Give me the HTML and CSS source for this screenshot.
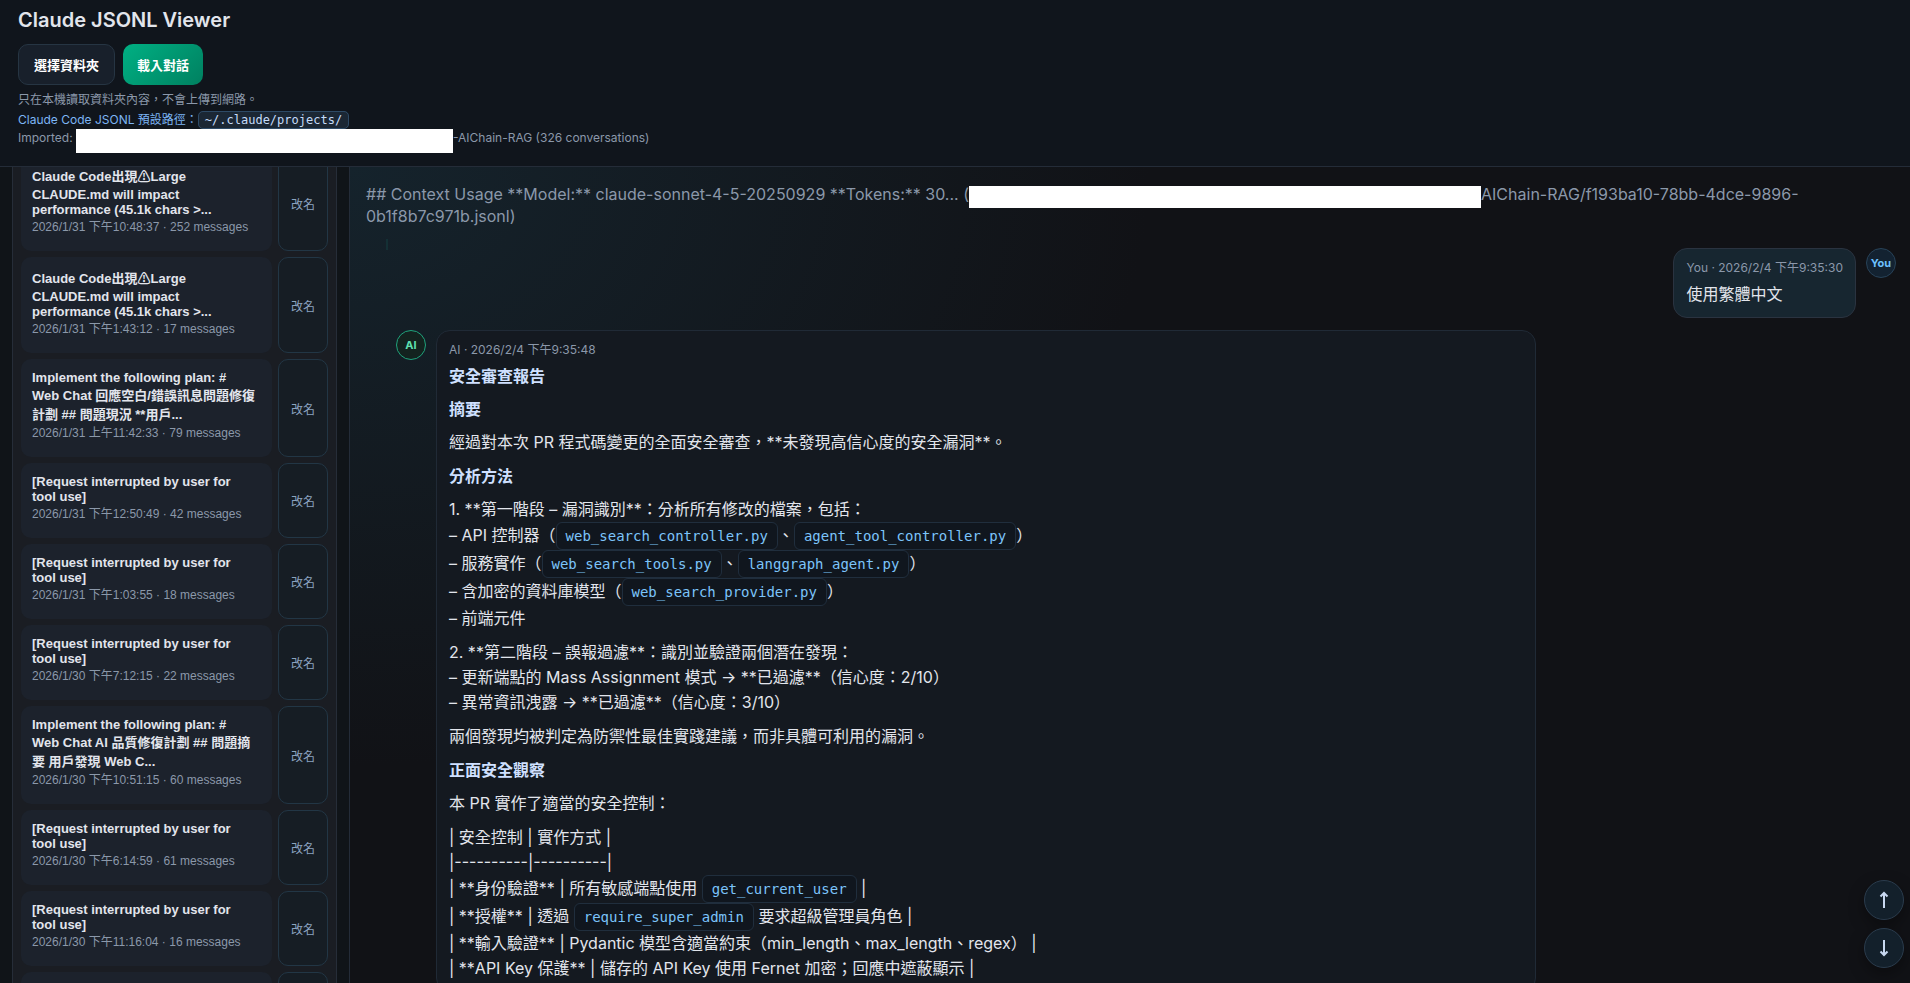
FILE: index.html
```html
<!doctype html>
<html lang="zh-Hant">
<head>
<meta charset="utf-8">
<meta name="viewport" content="width=device-width, initial-scale=1.0">
<title>Claude JSONL Viewer</title>
<link rel="stylesheet" href="styles.css">
</head>
<body>
<header class="topbar">
    <h1>Claude JSONL Viewer</h1>
    <div class="actions">
        <button type="button" class="btn">選擇資料夾</button>
        <button type="button" class="btn primary">載入對話</button>
    </div>
    <div class="hint">只在本機讀取資料夾內容，不會上傳到網路。</div>
    <div class="hint path">Claude Code JSONL 預設路徑：<code>~/.claude/projects/</code></div>
    <div class="hint status">Imported: <span class="redacted short"></span>-AIChain-RAG (326 conversations)</div>
</header>
<div class="layout">
    <aside class="sidebar" id="sidebar">
        <div class="row">
            <button type="button" class="item"><b>Claude Code出現<i>⚠</i>Large<br>CLAUDE.md will impact<br>performance (45.1k chars &gt;...</b><span>2026/1/31 下午10:48:37 · 252 messages</span></button>
            <button type="button" class="rename">改名</button>
        </div>
        <div class="row">
            <button type="button" class="item"><b>Claude Code出現<i>⚠</i>Large<br>CLAUDE.md will impact<br>performance (45.1k chars &gt;...</b><span>2026/1/31 下午1:43:12 · 17 messages</span></button>
            <button type="button" class="rename">改名</button>
        </div>
        <div class="row">
            <button type="button" class="item"><b>Implement the following plan: #<br>Web Chat 回應空白/錯誤訊息問題修復<br>計劃 ## 問題現況 **用戶...</b><span>2026/1/31 上午11:42:33 · 79 messages</span></button>
            <button type="button" class="rename">改名</button>
        </div>
        <div class="row">
            <button type="button" class="item"><b>[Request interrupted by user for<br>tool use]</b><span>2026/1/31 下午12:50:49 · 42 messages</span></button>
            <button type="button" class="rename">改名</button>
        </div>
        <div class="row">
            <button type="button" class="item"><b>[Request interrupted by user for<br>tool use]</b><span>2026/1/31 下午1:03:55 · 18 messages</span></button>
            <button type="button" class="rename">改名</button>
        </div>
        <div class="row">
            <button type="button" class="item"><b>[Request interrupted by user for<br>tool use]</b><span>2026/1/30 下午7:12:15 · 22 messages</span></button>
            <button type="button" class="rename">改名</button>
        </div>
        <div class="row">
            <button type="button" class="item"><b>Implement the following plan: #<br>Web Chat AI 品質修復計劃 ## 問題摘<br>要 用戶發現 Web C...</b><span>2026/1/30 下午10:51:15 · 60 messages</span></button>
            <button type="button" class="rename">改名</button>
        </div>
        <div class="row">
            <button type="button" class="item"><b>[Request interrupted by user for<br>tool use]</b><span>2026/1/30 下午6:14:59 · 61 messages</span></button>
            <button type="button" class="rename">改名</button>
        </div>
        <div class="row">
            <button type="button" class="item"><b>[Request interrupted by user for<br>tool use]</b><span>2026/1/30 下午11:16:04 · 16 messages</span></button>
            <button type="button" class="rename">改名</button>
        </div>
        <div class="row">
            <button type="button" class="item"></button>
            <button type="button" class="rename"></button>
        </div>
    </aside>
    <main class="viewer">
        <div class="conv-title">## Context Usage **Model:** claude-sonnet-4-5-20250929 **Tokens:** 30... (<span class="redacted long"></span>AIChain-RAG/f193ba10-78bb-4dce-9896-0b1f8b7c971b.jsonl)</div>
        <div class="feed">
            <div class="msg user">
                <div class="bubble">
                    <div class="meta">You · 2026/2/4 下午9:35:30</div>
                    <p>使用繁體中文</p>
                </div>
                <div class="avatar">You</div>
            </div>
            <div class="msg ai">
                <div class="avatar">AI</div>
                <div class="bubble">
                    <div class="meta">AI · 2026/2/4 下午9:35:48</div>
                    <h3>安全審查報告</h3>
                    <h3>摘要</h3>
                    <p>經過對本次 PR 程式碼變更的全面安全審查，**未發現高信心度的安全漏洞**。</p>
                    <h3>分析方法</h3>
                    <p>1. **第一階段 – 漏洞識別**：分析所有修改的檔案，包括：<br>
                    – API 控制器（<code>web_search_controller.py</code>、<code>agent_tool_controller.py</code>）<br>
                    – 服務實作（<code>web_search_tools.py</code>、<code>langgraph_agent.py</code>）<br>
                    – 含加密的資料庫模型（<code>web_search_provider.py</code>）<br>
                    – 前端元件</p>
                    <p>2. **第二階段 – 誤報過濾**：識別並驗證兩個潛在發現：<br>
                    – 更新端點的 Mass Assignment 模式 → **已過濾**（信心度：2/10）<br>
                    – 異常資訊洩露 → **已過濾**（信心度：3/10）</p>
                    <p>兩個發現均被判定為防禦性最佳實踐建議，而非具體可利用的漏洞。</p>
                    <h3>正面安全觀察</h3>
                    <p>本 PR 實作了適當的安全控制：</p>
                    <p>| 安全控制 | 實作方式 |<br>
                    |----------|----------|<br>
                    | **身份驗證** | 所有敏感端點使用 <code>get_current_user</code> |<br>
                    | **授權** | 透過 <code>require_super_admin</code> 要求超級管理員角色 |<br>
                    | **輸入驗證** | Pydantic 模型含適當約束（min_length、max_length、regex） |<br>
                    | **API Key 保護** | 儲存的 API Key 使用 Fernet 加密；回應中遮蔽顯示 |</p>
                </div>
            </div>
        </div>
    </main>
</div>
<div class="jump">
    <button type="button" aria-label="Top"><svg width="16" height="18" viewBox="0 0 16 18"><path d="M8 17V2M4.500 5.500L8 2l3.500 3.500"/></svg></button>
    <button type="button" aria-label="Bottom"><svg width="16" height="18" viewBox="0 0 16 18"><path d="M8 1v15M4.500 12.500L8 16l3.500-3.500"/></svg></button>
</div>
<script>
document.getElementById("sidebar").scrollTop = 20;
</script>
</body>
</html>
```
FILE: styles.css
```css
* {
    box-sizing: border-box;
}
body {
    margin: 0;
    height: 100vh;
    display: flex;
    flex-direction: column;
    overflow: hidden;
    background: #101418;
    color: #e2e5ec;
    font-family: Inter, "Noto Sans CJK TC", sans-serif;
    font-size: 16px;
}
button {
    font-family: "Liberation Sans", "Noto Sans CJK TC", sans-serif;
    cursor: pointer;
}
code {
    font-family: "DejaVu Sans Mono", monospace;
}

.topbar {
    flex: none;
    padding: 8px 18px 19px;
    background: #10151c;
    border-bottom: 1px solid #242c38;
}
.topbar h1 {
    margin: 0 0 12px;
    font-size: 20px;
    line-height: 24px;
    font-weight: 600;
}
.actions {
    display: flex;
    gap: 8px;
    margin-bottom: 6px;
}
.btn {
    height: 41px;
    padding: 0 15px;
    border: 1px solid #263543;
    border-radius: 10px;
    background: #18202b;
    color: #fff;
    font-size: 13px;
    font-weight: 700;
}
.btn.primary {
    padding: 0 14px;
    border: 0;
    background: linear-gradient(135deg, #00b083, #008060);
}
.hint {
    font-size: 12px;
    line-height: 18px;
    color: #8b98aa;
}
.path {
    margin-top: 2px;
    color: #7db5f5;
}
.path code {
    padding: 1px 6px;
    border: 1px solid #2d4a66;
    border-radius: 5px;
    background: #1b2734;
    color: #c5dcfa;
}
.redacted {
    display: inline-block;
    vertical-align: top;
    background: #fff;
}
.short {
    width: 377px;
    height: 24px;
    margin-bottom: -6px;
}
.long {
    width: 512px;
    height: 22px;
    max-width: 100%;
    margin: 3px 0 -3px;
}

.layout {
    flex: 1;
    min-height: 0;
    display: grid;
    grid-template-columns: 325px 1fr;
    gap: 12px;
    padding-left: 12px;
}
.sidebar {
    overflow-y: auto;
    scrollbar-width: none;
    padding: 8px;
    border: 1px solid #262d38;
    border-width: 0 1px;
    background: #1a1d23;
}
.row {
    display: grid;
    grid-template-columns: 1fr 50px;
    gap: 6px;
    margin-bottom: 6px;
}
.item {
    min-height: 75px;
    padding: 11px 11px 17px;
    border: 0;
    border-radius: 10px;
    background: #1c222c;
    color: #e2e5ec;
    text-align: left;
    white-space: nowrap;
    display: block;
}
.item b {
    display: block;
    font-size: 13px;
}
.item i {
    display: inline-block;
    height: 21px;
    vertical-align: top;
    font-style: normal;
}
.item span {
    display: block;
    font-size: 12px;
    color: #8b98aa;
}
.rename {
    padding: 0;
    border: 1px solid #223645;
    border-radius: 10px;
    background: #161d24;
    color: #8ba3c0;
    font-size: 12px;
}

.viewer {
    overflow: hidden;
    padding: 16px 14px 0 16px;
    border-left: 1px solid #242c38;
    background: radial-gradient(ellipse 800px 600px at 0 0, #15232c, #111216);
}
.conv-title {
    margin-bottom: 12px;
    line-height: 22px;
    color: #8b98aa;
}
.feed {
    margin-left: 20px;
    padding: 9px 0 0 10px;
    background: linear-gradient(#143035, #143035) 0 0 / 2px 11px no-repeat;
}
.msg {
    display: flex;
    align-items: flex-start;
    gap: 10px;
    margin-bottom: 12px;
}
.user {
    justify-content: flex-end;
}
.bubble {
    max-width: 1100px;
    padding: 10px 12px;
    border: 1px solid #202a36;
    border-radius: 14px;
    background: #141920;
}
.user .bubble {
    border-color: #2a3340;
    background: #172630;
}
.ai .bubble {
    flex: 1;
}
.meta {
    margin-bottom: 5px;
    font-size: 12px;
    line-height: 18px;
    color: #8b98aa;
}
.bubble h3,
.bubble p {
    margin: 0 0 9px;
    font-size: 16px;
    line-height: 25px;
    font-weight: 400;
}
.bubble h3 {
    margin-bottom: 8px;
    color: #cfe0ff;
    font-weight: 700;
}
.bubble p:last-child {
    margin: 0;
}
.bubble code {
    display: inline-block;
    padding: 0 9px;
    border: 1px solid #202e3d;
    border-radius: 6px;
    background: #10161e;
    color: #7cc4fa;
    font-size: 14px;
    line-height: 26px;
}
.avatar {
    flex: none;
    width: 30px;
    height: 30px;
    border: 1px solid #284258;
    border-radius: 50%;
    background: #132231;
    color: #6cc0ff;
    font-size: 11px;
    line-height: 28px;
    font-weight: 700;
    text-align: center;
}
.ai .avatar {
    border-color: #1fa37c;
    background: #13231f;
    color: #5fe0b0;
}

.jump {
    position: fixed;
    right: 6px;
    bottom: 15px;
    display: grid;
    gap: 8px;
}
.jump button {
    width: 40px;
    height: 40px;
    display: grid;
    place-items: center;
    padding: 0;
    border: 1px solid #2b3c4d;
    border-radius: 50%;
    background: #13202b;
    box-shadow: 0 6px 16px rgba(0, 0, 0, .35);
}
.jump svg {
    fill: none;
    stroke: #c8d8f0;
    stroke-width: 2;
}
```
